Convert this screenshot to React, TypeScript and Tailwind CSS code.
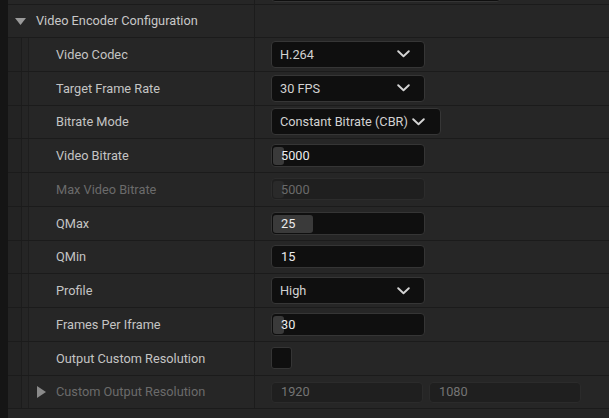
type Row =
  | { kind: 'combo'; label: string; value: string; wide?: boolean }
  | { kind: 'number'; label: string; value: string; fill: number; disabled?: boolean }
  | { kind: 'check'; label: string }
  | { kind: 'pair'; label: string; a: string; b: string };

const ROWS: Row[] = [
  { kind: 'combo', label: 'Video Codec', value: 'H.264' },
  { kind: 'combo', label: 'Target Frame Rate', value: '30 FPS' },
  { kind: 'combo', label: 'Bitrate Mode', value: 'Constant Bitrate (CBR)', wide: true },
  { kind: 'number', label: 'Video Bitrate', value: '5000', fill: 11 },
  { kind: 'number', label: 'Max Video Bitrate', value: '5000', fill: 11, disabled: true },
  { kind: 'number', label: 'QMax', value: '25', fill: 40 },
  { kind: 'number', label: 'QMin', value: '15', fill: 0 },
  { kind: 'combo', label: 'Profile', value: 'High' },
  { kind: 'number', label: 'Frames Per Iframe', value: '30', fill: 11 },
  { kind: 'check', label: 'Output Custom Resolution' },
  { kind: 'pair', label: 'Custom Output Resolution', a: '1920', b: '1080' },
];

function Chevron() {
  return (
    <svg width="13" height="8" viewBox="0 0 13 8" className="shrink-0">
      <path d="M1.2 1.2 L6.5 6.2 L11.8 1.2" fill="none" stroke="#d4d4d4" strokeWidth="1.9" strokeLinecap="round" strokeLinejoin="round" />
    </svg>
  );
}

function Combo({ value, wide }: { value: string; wide?: boolean }) {
  return (
    <div
      className={`flex items-center gap-[4px] h-[27px] rounded-[4px] bg-[#0f0f0f] border border-[#363636] pl-[8px] ${
        wide ? 'w-[170px] pr-[15px]' : 'w-[154px] pr-[14px]'
      }`}
    >
      <span className="flex-1 text-[12.75px] text-[#d2d2d2] whitespace-nowrap">{value}</span>
      <Chevron />
    </div>
  );
}

function NumberBox({ value, fill, disabled }: { value: string; fill: number; disabled?: boolean }) {
  return (
    <div
      className={`relative flex items-center w-[154px] rounded-[4px] border ${
        disabled ? 'h-[22px] bg-[#1f1f1f] border-[#2c2c2c]' : 'h-[23px] bg-[#0f0f0f] border-[#353535]'
      }`}
    >
      {/* slider fill behind the value */}
      {fill > 0 && (
        <div
          className={`absolute left-[1px] top-[2px] bottom-[1px] rounded-[3px] ${
            disabled ? 'bg-[#2a2a2a]' : 'bg-[#3a3a3a]'
          }`}
          style={{ width: fill }}
        />
      )}
      <span
        className={`relative pl-[9px] text-[12.75px] ${disabled ? 'text-[#6a6a6a]' : 'text-[#ececec]'}`}
      >
        {value}
      </span>
    </div>
  );
}

function DisabledBox({ value }: { value: string }) {
  return (
    <div className="flex items-center w-[152px] h-[21px] rounded-[4px] bg-[#1f1f1f] border border-[#2b2b2b] pl-[9px]">
      <span className="text-[12.75px] text-[#747474]">{value}</span>
    </div>
  );
}

function ValueCell({ row }: { row: Row }) {
  switch (row.kind) {
    case 'combo':
      return <Combo value={row.value} wide={row.wide} />;
    case 'number':
      return <NumberBox value={row.value} fill={row.fill} disabled={row.disabled} />;
    case 'check':
      return <div className="w-[21px] h-[22px] rounded-[3px] bg-[#0f0f0f] border border-[#353535]" />;
    case 'pair':
      return (
        <div className="flex gap-[6px]">
          <DisabledBox value={row.a} />
          <DisabledBox value={row.b} />
        </div>
      );
  }
}

function PropertyRow({ row }: { row: Row }) {
  const dim = (row.kind === 'number' && row.disabled) || row.kind === 'pair';
  return (
    <div className="flex h-[33.77px] border-b border-[#1b1b1b]">
      <div className="flex w-[246px] shrink-0">
        {/* indent guides */}
        <div className="w-[14px] bg-[#232323] border-r border-[#1c1c1c]" />
        <div className="w-[7px] bg-[#252525] border-r border-[#1e1e1e]" />
        <div className="relative flex-1 flex items-center pl-[27px]">
          {row.kind === 'pair' && (
            <svg className="absolute left-[8px] top-1/2 -translate-y-1/2" width="9" height="12" viewBox="0 0 9 12">
              <path d="M0 0 L9 6 L0 12 Z" fill="#8a8a8a" />
            </svg>
          )}
          <span className={`text-[12.75px] whitespace-nowrap ${dim ? 'text-[#6b6b6b]' : 'text-[#c4c4c4]'}`}>
            {row.label}
          </span>
        </div>
      </div>
      <div className="flex-1 flex items-center border-l border-[#1c1c1c] pl-[16px]">
        <ValueCell row={row} />
      </div>
    </div>
  );
}

export default function App() {
  return (
    <div className="flex w-[609px] h-[418px] overflow-hidden bg-[#151515] font-['Roboto',sans-serif]">
      <div className="w-[8px] shrink-0" />
      <div className="flex-1 flex flex-col bg-[#262626]">
        {/* tail of the previous row */}
        <div className="flex h-[5px] shrink-0 border-b border-[#1b1b1b] overflow-hidden">
          <div className="w-[246px] shrink-0" />
          <div className="flex-1 border-l border-[#1c1c1c] pl-[16px]">
            <div className="mt-[-21px] w-[230px] h-[23px] rounded-[4px] bg-[#0f0f0f] border border-[#353535]" />
          </div>
        </div>

        {/* category header */}
        <div className="flex h-[33px] shrink-0 border-b border-[#1b1b1b]">
          <div className="flex items-center w-[246px] shrink-0 pl-[7px]">
            <svg width="11" height="7" viewBox="0 0 11 7">
              <path d="M0 0 L11 0 L5.5 7 Z" fill="#9a9a9a" />
            </svg>
            <span className="ml-[10px] text-[12.75px] text-[#c8c8c8] whitespace-nowrap">
              Video Encoder Configuration
            </span>
          </div>
          <div className="flex-1 border-l border-[#1c1c1c]" />
        </div>

        {ROWS.map((row) => (
          <PropertyRow key={row.label} row={row} />
        ))}
      </div>
    </div>
  );
}
